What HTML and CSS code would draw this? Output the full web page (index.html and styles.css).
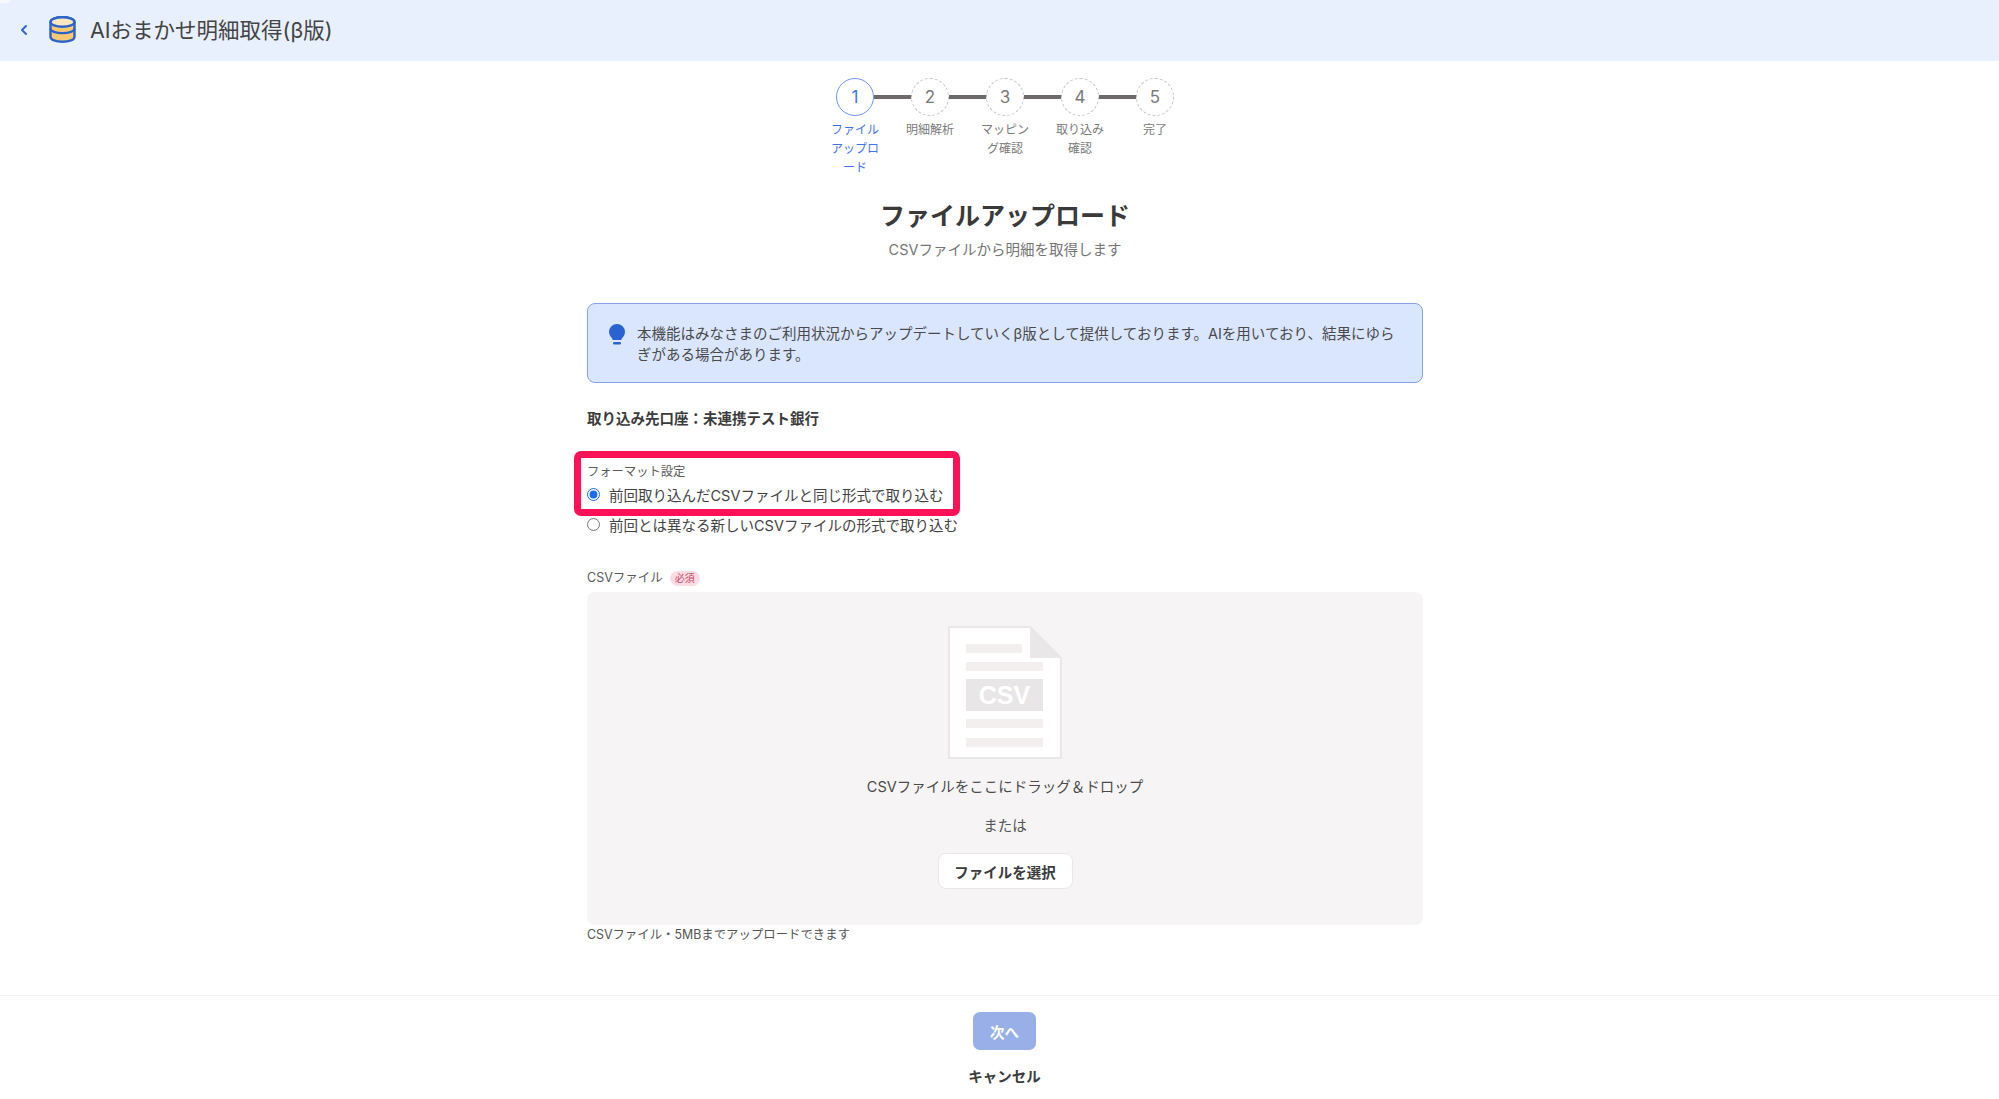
FILE: index.html
```html
<!DOCTYPE html>
<html lang="ja">
<head>
    <meta charset="UTF-8">
    <title>AIおまかせ明細取得（β版）</title>
    <link rel="stylesheet" href="styles.css">
</head>
<body>
    <div class="corner-tab"></div>
    <header class="app-header">
        <svg class="back" viewBox="0 0 8 12" fill="none" stroke="#2f66cf" stroke-width="2" stroke-linecap="round" stroke-linejoin="round">
            <path d="M6 2L2 6l4 4"/>
        </svg>
        <svg class="db-icon" viewBox="0 0 27 27">
            <path d="M1.500 6c0-2.800 5.400-4.800 12-4.800s12 2 12 4.800v15c0 2.800-5.400 4.800-12 4.800s-12-2-12-4.800z" fill="#fcc873" stroke="#2b63c9" stroke-width="2.400"/>
            <ellipse cx="13.500" cy="6" rx="12" ry="4.800" fill="#fde6c2" stroke="#2b63c9" stroke-width="2.400"/>
            <path d="M1.500 12.500c0 2.800 5.400 4.600 12 4.600s12-1.800 12-4.600" fill="none" stroke="#2b63c9" stroke-width="2.400"/>
        </svg>
        <span class="app-title">AIおまかせ明細取得(β版)</span>
    </header>

    <main class="content">
        <ol class="stepper">
            <li class="step active"><span class="num">1</span><span class="step-label">ファイルアップロード</span></li>
            <li class="step"><span class="num">2</span><span class="step-label">明細解析</span></li>
            <li class="step"><span class="num">3</span><span class="step-label">マッピング確認</span></li>
            <li class="step"><span class="num">4</span><span class="step-label">取り込み確認</span></li>
            <li class="step"><span class="num">5</span><span class="step-label">完了</span></li>
        </ol>

        <h1>ファイルアップロード</h1>
        <p class="subtitle">CSVファイルから明細を取得します</p>

        <div class="notice">
            <svg class="bulb" viewBox="0 0 16 21" fill="#2a62d2">
                <path d="M8 0a8 8 0 0 1 8 8c0 3.200-2 4.800-3 6.300-.4.600-.6 1.200-.7 1.700H3.700c-.1-.5-.3-1.100-.7-1.700C2 12.800 0 11.200 0 8a8 8 0 0 1 8-8z"/>
                <rect x="4" y="18" width="8" height="2.600" rx="1.300"/>
            </svg>
            <p>本機能はみなさまのご利用状況からアップデートしていくβ版として提供しております。AIを用いており、結果にゆらぎがある場合があります。</p>
        </div>

        <p class="account">取り込み先口座：未連携テスト銀行</p>

        <div class="format">
            <div class="field-label">フォーマット設定</div>
            <label class="radio"><input type="radio" name="format" checked>前回取り込んだCSVファイルと同じ形式で取り込む</label>
            <label class="radio"><input type="radio" name="format">前回とは異なる新しいCSVファイルの形式で取り込む</label>
            <div class="highlight"></div>
        </div>

        <div class="file-label">CSVファイル<span class="required">必須</span></div>
        <div class="dropzone">
            <svg class="file-icon" viewBox="0 0 114 133">
                <path d="M1 1h81l31 31v100H1z" fill="#fff" stroke="#e9e7e8" stroke-width="2"/>
                <path d="M82 1l31 31H82z" fill="#e9e7e8"/>
                <rect x="18" y="18" width="56" height="9" fill="#f3efef"/>
                <rect x="18" y="36" width="77" height="9" fill="#f3efef"/>
                <rect x="18" y="53" width="77" height="32" fill="#e8e6e7"/>
                <text x="56.500" y="78" class="file-icon-text">CSV</text>
                <rect x="18" y="93" width="77" height="9" fill="#f3efef"/>
                <rect x="18" y="112" width="77" height="9" fill="#f3efef"/>
            </svg>
            <p class="drop-text">CSVファイルをここにドラッグ＆ドロップ</p>
            <p class="drop-or">または</p>
            <button class="select-btn" type="button">ファイルを選択</button>
        </div>
        <p class="hint">CSVファイル・5MBまでアップロードできます</p>
    </main>

    <footer class="actions">
        <button class="next-btn" type="button">次へ</button>
        <a class="cancel">キャンセル</a>
    </footer>
</body>
</html>
```

FILE: styles.css
```css
* {
    margin: 0;
    padding: 0;
    box-sizing: border-box;
}
html, body {
    height: 1099px;
    overflow: hidden;
}
body {
    background: #fff;
    color: #3c3c3c;
    font-family: 'Inter', 'Noto Sans CJK JP', sans-serif;
    font-size: 14.500px;
}

/* leftover tab peeking in at the top-left */
.corner-tab {
    position: absolute;
    top: 0;
    left: 0;
    width: 10px;
    height: 3px;
    background: #f7f8fc;
    border-bottom-right-radius: 3px;
}

/* header */
.app-header {
    height: 61px;
    background: #e9f0fd;
    display: flex;
    align-items: center;
    padding: 0 0 2px 20px;
}
.back {
    width: 8px;
    height: 12px;
}
.db-icon {
    width: 27px;
    height: 27px;
    margin-left: 21px;
}
.app-title {
    margin: 0 0 2px 14px;
    font-size: 21.500px;
    color: #444;
}

/* main column */
.content {
    width: 847px;
    margin: 0 auto;
    padding-left: 11px;
}

/* stepper */
.stepper {
    list-style: none;
    display: flex;
    justify-content: center;
    padding-top: 17px;
}
.step {
    width: 75px;
    display: flex;
    flex-direction: column;
    align-items: center;
    position: relative;
    color: #7a7a7a;
}
.step:not(:last-child)::after {
    content: '';
    position: absolute;
    top: 17px;
    left: 56px;
    width: 38px;
    height: 4px;
    background: #6e6a6a;
}
.num {
    width: 38px;
    height: 38px;
    border: 1px dashed #c4c4c4;
    border-radius: 50%;
    display: flex;
    align-items: center;
    justify-content: center;
    font-size: 17px;
    background: #fff;
}
.step-label {
    width: 50px;
    margin-top: 4px;
    font-size: 12px;
    line-height: 19px;
    text-align: center;
    min-height: 57px;
}
.step.active {
    color: #3f74ee;
}
.step.active .num {
    border: 1px solid #6d97f3;
}

/* headings */
h1 {
    margin-top: 21px;
    font-size: 25px;
    line-height: 36px;
    font-weight: 700;
    text-align: center;
    color: #3a3a3a;
}
.subtitle {
    margin-top: 6px;
    line-height: 20px;
    color: #757575;
    text-align: center;
}

/* notice */
.notice {
    margin-top: 43px;
    height: 80px;
    display: flex;
    gap: 12px;
    padding: 19px 21px;
    background: #dae6fe;
    border: 1px solid #84a3e8;
    border-radius: 8px;
    line-height: 21px;
    color: #4a4a4a;
}
.bulb {
    flex: none;
    width: 16px;
    height: 21px;
    margin-top: 1px;
}

.account {
    margin-top: 26px;
    line-height: 20px;
    font-weight: 700;
}

/* format radios */
.format {
    margin-top: 35px;
    position: relative;
}
.field-label {
    font-size: 12.300px;
    line-height: 16px;
    color: #5a5a5a;
    margin-bottom: -1px;
}
.radio {
    display: flex;
    align-items: center;
    gap: 9px;
    height: 30px;
    color: #444;
}
.radio input {
    width: 13px;
    height: 13px;
    accent-color: #1b6cf2;
}
.highlight {
    position: absolute;
    top: -13px;
    left: -13px;
    width: 386px;
    height: 65px;
    border: 7px solid #ff1158;
    border-radius: 7px;
}

/* file upload */
.file-label {
    margin-top: 30px;
    font-size: 12.500px;
    line-height: 18px;
    display: flex;
    align-items: center;
    color: #5a5a5a;
}
.required {
    margin-left: 7px;
    width: 30px;
    height: 15px;
    border-radius: 8px;
    background: #fbdde3;
    color: #d0485f;
    font-size: 10px;
    line-height: 15px;
    text-align: center;
}
.dropzone {
    margin-top: 5px;
    height: 333px;
    padding-top: 34px;
    background: #f6f4f5;
    border-radius: 8px;
    display: flex;
    flex-direction: column;
    align-items: center;
}
.file-icon {
    width: 114px;
    height: 133px;
    flex: none;
}
.file-icon-text {
    fill: #fff;
    font-family: 'Liberation Sans', sans-serif;
    font-size: 25px;
    font-weight: 700;
    text-anchor: middle;
}
.drop-text {
    margin-top: 18px;
    line-height: 20px;
    color: #4a4a4a;
}
.drop-or {
    margin-top: 19px;
    line-height: 20px;
    color: #555;
}
.select-btn {
    margin-top: 17px;
    width: 135px;
    height: 36px;
    background: #fff;
    border: 1px solid #e9e7e8;
    border-radius: 8px;
    font-family: inherit;
    font-size: 14.500px;
    font-weight: 700;
    color: #3c3c3c;
}
.hint {
    margin-top: 2px;
    font-size: 12.400px;
    line-height: 16px;
    color: #555;
}

/* footer */
.actions {
    margin-top: 52px;
    padding: 16px 0 0 10px;
    border-top: 1px solid #f2f2f4;
    display: flex;
    flex-direction: column;
    align-items: center;
}
.next-btn {
    width: 63px;
    height: 38px;
    background: #98afe8;
    border: none;
    border-radius: 7px;
    color: #fff;
    font-family: inherit;
    font-size: 14.500px;
    font-weight: 700;
}
.cancel {
    margin-top: 17px;
    line-height: 20px;
    font-weight: 700;
    color: #3c3c3c;
}
```
